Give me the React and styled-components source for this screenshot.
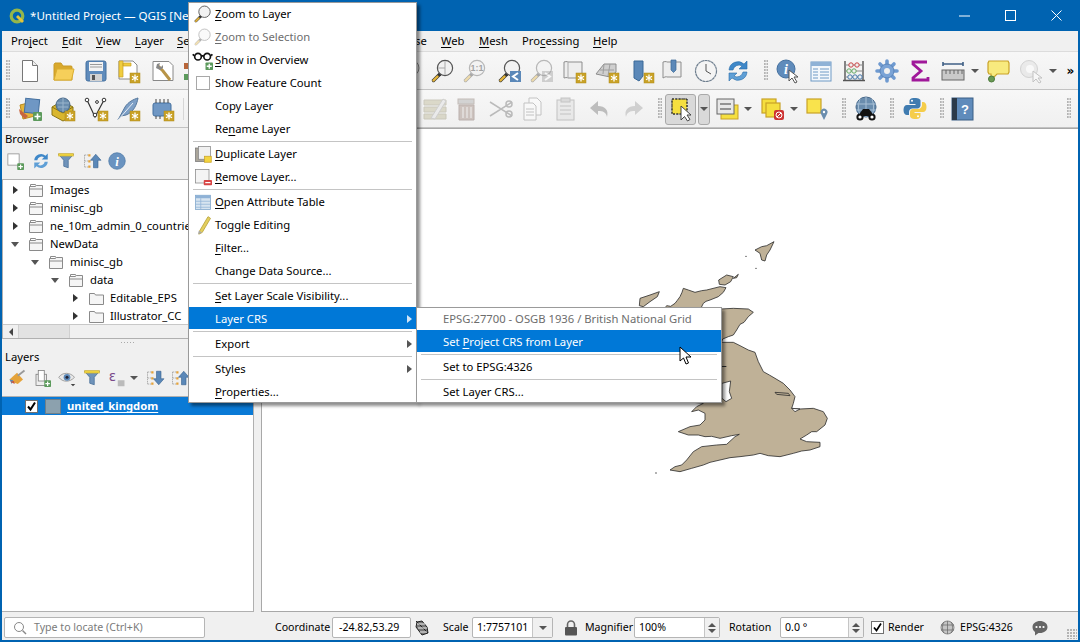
import React from "react";
import styled, { createGlobalStyle, css } from "styled-components";

const Global = createGlobalStyle`
  html, body { margin: 0; padding: 0; background: #f0f0f0; }
  body { font: 11.25px/1 "Noto Sans", "Open Sans", sans-serif; color: #000; }
  u { text-underline-offset: 2px; text-decoration-thickness: 1px; }
`;

const Window = styled.div`
  width: 1080px; height: 642px; box-sizing: border-box; position: relative; overflow: hidden;
  border: 2px solid #0063b1; border-top: 0; background: #f0f0f0; display: flex; flex-direction: column;
`;
const TitleBar = styled.div`
  height: 31px; margin: 0 -2px; background: #0063b1; color: #fff; display: flex; align-items: center; flex: none;
  font-size: 11.6px;
`;
const TitleLogo = styled.span`width: 30px; display: flex; justify-content: center; padding-left: 3px; box-sizing: border-box;`;
const TitleText = styled.span`flex: 1; white-space: nowrap;`;
const WinButton = styled.span`width: 46px; height: 31px; display: flex; align-items: center; justify-content: center;`;
const MenuBar = styled.div`height: 20px; flex: none; display: flex; align-items: center; padding-left: 9px; border-bottom: 1px solid #dcdcdc; background: #f0f0f0;`;
const MenuTitle = styled.span`width: ${p => p.$w}px; flex: none; white-space: nowrap;`;
const MenuGap = styled.span`width: ${p => p.$w}px; flex: none;`;
const Toolbar = styled.div`
  height: ${p => p.$h}px; flex: none; display: flex; align-items: center; box-sizing: border-box;
  background: linear-gradient(#f7f7f7, #f0f0f0); border-bottom: 1px solid #c2c2c2;
`;
const Tool = styled.span`
  width: 24px; height: 24px; flex: none; display: flex; align-items: center; justify-content: center; position: relative;
  ${p => p.$active && css`
    &::before { content: ""; position: absolute; inset: -3px -3px -4px -4px; background: #d9d9d9; border: 1px solid #a9a9a9; border-radius: 3px; box-sizing: border-box; }
    & > * { position: relative; }
  `}
  ${p => p.$drop && css`
    &::before { content: ""; position: absolute; inset: -3px 6px -4px 6px; background: #d9d9d9; border: 1px solid #a9a9a9; border-radius: 3px; box-sizing: border-box; }
    & > * { position: relative; }
  `}
`;
const Grip = styled.span`
  width: 4px; height: 21px; display: block;
  background-image: radial-gradient(circle at 1px 1px, #b4b4b4 0.9px, transparent 1px);
  background-size: 2.5px 3px;
`;
const Sep = styled.span`width: 1px; height: 22px; background: #d6d6d6;`;
const Caret = styled.span`width: 0; height: 0; border: 4px solid transparent; border-top: 4px solid #555; border-bottom: 0; display: block;`;
const More = styled.span`font: bold 12px "DejaVu Sans", sans-serif; letter-spacing: -1px;`;
const Main = styled.div`flex: 1; display: flex; min-height: 0;`;
const LeftDock = styled.div`width: 252px; flex: none; display: flex; flex-direction: column; `;
const DockTitle = styled.div`height: ${p => p.$h}px; display: flex; align-items: center; padding-left: 3px; flex: none;`;
const DockTools = styled.div`height: ${p => p.$h}px; display: flex; align-items: flex-start; flex: none; padding-top: 2px; box-sizing: border-box;`;
const SmallTool = styled.span`width: 18px; height: 18px; flex: none; display: flex; align-items: center; justify-content: center;`;
const TreeFrame = styled.div`height: 160px; flex: none; border: 1px solid #b0b0b0; box-sizing: border-box; display: flex; flex-direction: column; background: #fff; overflow: hidden;`;
const TreeBody = styled.div`flex: 1; padding-top: 1px; overflow: hidden; min-height: 0;`;
const TreeRow = styled.div`height: 18px; display: flex; align-items: center; padding-left: ${p => p.$depth * 20 + 7}px; white-space: nowrap;`;
const Arrow = styled.span`
  width: 19px; flex: none; display: flex; justify-content: flex-start; padding-left: 2px; box-sizing: border-box;
  &::before { content: ""; display: block; border-style: solid; border-color: transparent;
    ${p => p.$open
      ? css`border-width: 5px 4px 0 4px; border-top-color: #555; margin-left: -1px;`
      : css`border-width: 4px 0 4px 5px; border-left-color: #333; margin-left: 1px;`}
  }
`;
const TreeLabel = styled.span`margin-left: 6px;`;
const HScroll = styled.div`height: 13px; flex: none; display: flex; background: #f0f0f0; border-top: 1px solid #c8c8c8; align-items: stretch;`;
const ScrollBtn = styled.span`width: 15px; display: flex; align-items: center; justify-content: center;
  &::before { content: ""; border-style: solid; border-width: 4px 4px 4px 0; border-color: transparent #444 transparent transparent; }`;
const ScrollThumb = styled.span`width: 50px; background: #e2e2e2; border-left: 1px solid #d0d0d0; border-right: 1px solid #d0d0d0;`;
const DockSplit = styled.div`height: 7px; flex: none; display: flex; align-items: center; justify-content: center;
  &::before { content: ""; width: 16px; height: 1px; background-image: radial-gradient(circle, #aaa 0.7px, transparent 0.8px); background-size: 3px 1px; }`;
const LayerList = styled.div`flex: 1; background: #fff; border: 1px solid #b0b0b0; border-width: 1px 1px 1px 0; box-sizing: border-box;`;
const LayerRow = styled.div`height: 18px; background: #0a7ad6; display: flex; align-items: center; padding-left: 23px; color: #fff; font-weight: 700; text-decoration: underline; text-underline-offset: 2px;`;
const Check = styled.span`
  width: 13px; height: 13px; flex: none; box-sizing: border-box; background: #fff; border: 1px solid #707070; display: flex; align-items: center; justify-content: center;
  margin-left: ${p => p.$ml || 0}px;
`;
const Swatch = styled.span`width: 16px; height: 15px; box-sizing: border-box; background: #8ca1ae; border: 1px solid #6f7f89; margin: 0 6px 0 7px; flex: none;`;
const Canvas = styled.div`flex: 1; margin-left: 7px; background: #fff; border: 1px solid #a8a8a8; border-width: 1px 0 1px 1px; position: relative; overflow: hidden; box-sizing: border-box;`;
const MapSvg = styled.svg`position: absolute; left: 358px; top: 106px; width: 220px; height: 250px;`;
const StatusBar = styled.div`height: 28px; flex: none; display: flex; align-items: center; padding-top: 3px; box-sizing: border-box; position: relative; font-size: 10.6px;`;
const Locator = styled.div`
  width: 201px; height: 21px; box-sizing: border-box; margin-left: 2px; border: 1px solid #b5b5b5; border-radius: 2px; background: #fff;
  display: flex; align-items: center; padding-left: 8px; gap: 7px; color: #7a7a7a; flex: none;
`;
const SLabel = styled.span`margin-left: ${p => p.$ml}px; width: ${p => p.$w}px; white-space: nowrap; flex: none;`;
const Field = styled.span`
  width: ${p => p.$w}px; height: 21px; box-sizing: border-box; border: 1px solid #b5b5b5; border-radius: 2px; background: #fff;
  display: flex; align-items: center; flex: none; padding-left: ${p => p.$pl || 4}px; position: relative; white-space: nowrap;
`;
const SpinBox = styled.span`position: absolute; right: 0; top: 0; bottom: 0; width: 14px; background: #f0f0f0; border-left: 1px solid #c5c5c5; display: flex; flex-direction: column; align-items: center; justify-content: center; gap: 2px;
  &::before { content: ""; border-style: solid; border-width: 0 4px 4px 4px; border-color: transparent transparent #555 transparent; }
  &::after { content: ""; border-style: solid; border-width: 4px 4px 0 4px; border-color: #555 transparent transparent transparent; }`;
const ComboDrop = styled.span`position: absolute; right: 0; top: 0; bottom: 0; width: 19px; background: #f0f0f0; border-left: 1px solid #c5c5c5; display: flex; align-items: center; justify-content: center;
  &::before { content: ""; border-style: solid; border-width: 4px 4px 0 4px; border-color: #555 transparent transparent transparent; }`;
const StatusIcon = styled.span`margin-left: ${p => p.$ml}px; width: 18px; height: 18px; flex: none; display: flex; align-items: center; justify-content: center;`;
const SizeGrip = styled.span`position: absolute; right: 1px; bottom: 1px; width: 10px; height: 10px;
  background-image: radial-gradient(circle at 1px 1px, #b4b4b4 0.8px, transparent 0.9px); background-size: 3px 3px;`;
const PopMenu = styled.div`
  position: absolute; box-sizing: border-box; background: #fff; border: 1px solid #9a9a9a; box-shadow: 3px 3px 3px rgba(0,0,0,.45);
  left: ${p => p.$x}px; top: ${p => p.$y}px; width: ${p => p.$w}px; height: ${p => p.$h}px; overflow: hidden; z-index: ${p => p.$z};
`;
const Row = styled.div`
  height: 23px; display: flex; align-items: center; position: relative; box-sizing: border-box; padding-bottom: 1px; white-space: nowrap;
  color: ${p => p.$off ? "#6d6d6d" : "#000"};
  ${p => p.$hi && css`
    color: #fff; z-index: 0;
    &::before { content: ""; position: absolute; left: 0; right: 0; top: -1px; height: 22px; background: #0078d7; z-index: -1; }
  `}
`;
const RowIcon = styled.span`width: 26px; flex: none; display: flex; justify-content: center; padding-left: 1px; box-sizing: border-box; align-items: center;`;
const BoxIcon = styled.span`width: 14px; height: 14px; display: block; box-sizing: border-box; border: 1px solid #a8a8a8; background: #fff;`;
const SubArrow = styled.span`position: absolute; right: 4px; top: 7px; border-style: solid; border-width: 4px 0 4px 5px; border-color: transparent transparent transparent ${p => p.$hi ? "#cfe4f7" : "#555"};`;
const RowSep = styled.div`height: 2px; margin: 0 4px; box-sizing: border-box; border-top: 1px solid #c4c4c4;`;
const Cursor = styled.svg`position: absolute; left: 677px; top: 346px; width: 14px; height: 19px; z-index: 5;`;
const Icon = styled.svg.attrs(p => ({ viewBox: "0 0 24 24", width: p.$s || 24, height: p.$s || 24 }))`display: block; overflow: visible;`;

const Gold = () => (<g><rect x="14" y="14" width="10" height="10" fill="#c9a227" stroke="#b08a18" strokeWidth=".5" /><path d="M19 15.5v7M16 17.2l6 3.6M22 17.2l-6 3.6" stroke="#fff" strokeWidth="1.3" /></g>);
const Glass = ({ off, children }) => (
  <g opacity={off ? .38 : 1}>
    <path d="M9 15L2.5 21.5" stroke="#333" strokeWidth="3.4" strokeLinecap="round" />
    <path d="M6.5 17.5L2.5 21.5" stroke="#e5b53a" strokeWidth="2.4" strokeLinecap="round" />
    <circle cx="14" cy="9" r="7.6" fill="#f2f2f2" stroke="#555" strokeWidth="1.2" />
    {children}
  </g>
);
const Funnel = () => (<g><path d="M2 3h20l-7 8v10l-6-2v-8z" fill="#6f93ba" stroke="#456d97" /><path d="M2 2h20v3.5H2z" fill="#ecd23f" stroke="#c9a227" strokeWidth=".6" /></g>);
const Cat = ({ up }) => (
  <g>
    <path d="M2 4v16M2 4h6M2 12h6M2 20h6" stroke="#999" fill="none" strokeDasharray="2 1" />
    <rect x="7" y="3" width="3" height="3" fill="#e5a33a" /><rect x="7" y="11" width="3" height="3" fill="#e5a33a" /><rect x="7" y="18" width="3" height="3" fill="#e5a33a" />
    <path d={up ? "M17 3l7 8h-4v10h-6V11h-4z" : "M14 3h6v10h4l-7 8-7-8h4z"} fill="#5b88b8" stroke="#35618f" strokeWidth=".8" />
  </g>
);
const GreenPlus = () => (<g><rect x="15" y="15" width="9" height="9" fill="#5c9a5c" rx="1" /><path d="M19.5 16.5v6M16.5 19.5h6" stroke="#fff" strokeWidth="1.6" /></g>);

const I = {
  newDoc: <Icon><path d="M4.5 1.5h10l5 5v16h-15z" fill="#fff" stroke="#777" /><path d="M14.5 1.5v5h5" fill="#eee" stroke="#777" /></Icon>,
  folder: <Icon><path d="M3 21V5.5l1-1.5h6l2 3h8.5l.5 1V21z" fill="#d9a92c" stroke="#c99a24" /><path d="M3 21l3-11h17l-2.5 11z" fill="#f6cf5a" stroke="#d9ad30" /></Icon>,
  save: <Icon><rect x="2" y="2" width="20" height="20" rx="2" fill="#5f8bbb" stroke="#44709f" /><rect x="5" y="3" width="14" height="9" fill="#f3f3f3" /><path d="M6 5.5h12M6 8h12" stroke="#999" /><rect x="6" y="15" width="12" height="7" fill="#d2d2d2" /><rect x="8" y="16" width="3" height="5" fill="#555" /></Icon>,
  printLayout: <Icon><path d="M3 2h14l4 4v14H3z" fill="#fff" stroke="#888" /><path d="M3 2h4v16h-4zM7 4h8v3H7z" fill="#f0cd3f" stroke="#c9a227" strokeWidth=".7" /><Gold /></Icon>,
  layoutMgr: <Icon><path d="M2 2.5h16l4 4v15H2z" fill="#fff" stroke="#888" /><path d="M7 7l5 5 7 9" stroke="#b89447" strokeWidth="3" /><path d="M5 9l1-4 3-1-1 3 2 1 2-2v3l-3 2z" fill="#888" /></Icon>,
  hiddenTool: <Icon><rect x="0" y="4" width="6" height="6" fill="#b8663a" /><rect x="0" y="15" width="6" height="6" fill="#5c9a5c" /></Icon>,
  pan: <Icon><circle cx="5" cy="9" r="8" fill="#eee" stroke="#888" /></Icon>,
  zoomNative: <Icon><Glass><path d="M14 2v14M14 9h-7" stroke="#aaa" fill="none" /></Glass></Icon>,
  zoom11: <Icon><Glass off><text x="14" y="12" fontSize="9" fontWeight="700" textAnchor="middle" fontFamily="Liberation Sans" fill="#222">1:1</text></Glass></Icon>,
  zoomLast: <Icon><Glass /><rect x="12" y="12" width="11" height="11" fill="#5b88b8" /><path d="M20 14l-5 3.5 5 3.5" stroke="#fff" strokeWidth="2" fill="none" /></Icon>,
  zoomNext: <Icon><Glass off /><g opacity=".4"><rect x="12" y="12" width="11" height="11" fill="#999" /><path d="M15 14l5 3.5-5 3.5" stroke="#fff" strokeWidth="2" fill="none" /></g></Icon>,
  mapView: <Icon><path d="M2 3c3-1 4 0 4 0h14v16H6s-1-1-4 0z" fill="#eee" stroke="#8d8d8d" /><path d="M6 3v16" stroke="#aaa" /><Gold /></Icon>,
  map3d: <Icon><path d="M1 15L9 5h12v8l-6 5z" fill="#cfcfcf" stroke="#8d8d8d" /><path d="M5 11h14M9 5l-1 10M15 5l-2 12" stroke="#9e9e9e" fill="none" /><Gold /></Icon>,
  bookmarkNew: <Icon><path d="M4 2h9v15l-4 5-5-3z" fill="#5b88b8" stroke="#3a6897" /><Gold /></Icon>,
  bookmarks: <Icon><path d="M2 3c3-1 4 0 4 0h14v15H6s-1-1-4 1z" fill="#eee" stroke="#8d8d8d" /><path d="M10 1h5v10l-2.5 2.5L10 11z" fill="#5b88b8" stroke="#3a6897" strokeWidth=".7" /></Icon>,
  clock: <Icon><circle cx="12" cy="12" r="10.5" fill="#f4f4f4" stroke="#6f7f8f" strokeWidth="1.2" strokeDasharray="3 .4" /><path d="M12 5v7l5 3" stroke="#555" fill="none" /></Icon>,
  refresh: <Icon><path d="M3 11a9 9 0 0 1 15-6l3-3v8h-8l3-3a6 6 0 0 0-9 4z" fill="#3f88c9" stroke="#2a6da8" strokeWidth=".6" /><path d="M21 13a9 9 0 0 1-15 6l-3 3v-8h8l-3 3a6 6 0 0 0 9-4z" fill="#5f9fd6" stroke="#2a6da8" strokeWidth=".6" /></Icon>,
  identify: <Icon><circle cx="10" cy="10" r="9" fill="#5f8bbb" stroke="#44709f" /><text x="10" y="15" fontFamily="Liberation Serif" fontStyle="italic" fontWeight="700" fontSize="14" fill="#fff" textAnchor="middle">i</text><path d="M13 11v11l3-3 3 5 2-1-3-5h4z" fill="#fff" stroke="#555" /></Icon>,
  table: <Icon><rect x="2" y="3" width="20" height="19" fill="#f3f7fb" stroke="#6f9ac5" /><rect x="2" y="3" width="20" height="4" fill="#8fb2d6" /><path d="M4 10h5M11 10h9M4 13h5M11 13h9M4 16h5M11 16h9M4 19h5M11 19h9" stroke="#6f9ac5" /></Icon>,
  abacus: <Icon><path d="M3 2v19M21 2v19M1 21.5h22" stroke="#555" strokeWidth="1.4" /><path d="M3 6h18M3 12h18M3 18h18" stroke="#888" /><g fill="#eee" strokeWidth="1"><circle cx="9" cy="6" r="2.2" stroke="#c44" /><circle cx="15" cy="6" r="2.2" stroke="#c44" /><circle cx="7" cy="12" r="2.2" stroke="#6a6" /><circle cx="12" cy="12" r="2.2" stroke="#6a6" /><circle cx="8" cy="18" r="2.2" stroke="#47a" /><circle cx="13" cy="18" r="2.2" stroke="#47a" /><circle cx="18" cy="18" r="2.2" stroke="#47a" /></g></Icon>,
  gear: <Icon><g stroke="#6f9ad0" strokeWidth="3.6" strokeLinecap="round"><path d="M12 2v20M2 12h20M5 5l14 14M19 5L5 19" /></g><circle cx="12" cy="12" r="7" fill="#7aa3d6" stroke="#5a85bb" /><circle cx="12" cy="12" r="3" fill="#f0f0f0" /></Icon>,
  sigma: <Icon><path d="M19 3H5v2l8 7-8 7v2h15v-3" fill="none" stroke="#a0189a" strokeWidth="2.8" /></Icon>,
  ruler: <Icon><path d="M2 5h20M2 3v4M22 3v4" stroke="#3f5f85" strokeWidth="1.6" /><rect x="1" y="11" width="22" height="10" fill="#c9c9c9" stroke="#666" /><path d="M5 11v4M9 11v4M13 11v4M17 11v4M21 11v4" stroke="#666" /></Icon>,
  note: <Icon><path d="M3 2h19l1 2v9l-1 2H11l-6 6v-6H3l-1-2V4z" fill="#f8ea7e" stroke="#c9a227" strokeWidth="1.2" /><circle cx="5.5" cy="20" r="3" fill="#6a9a55" stroke="#4c7a3c" /></Icon>,
  tip: <Icon><g opacity=".45"><circle cx="10" cy="10" r="8.5" fill="#ddd" stroke="#aaa" /><circle cx="11" cy="10" r="4" fill="#fff" /><path d="M14 12v11l3-3 3 4 2-1-3-4h4z" fill="#fff" stroke="#888" /></g></Icon>,
  dataSource: <Icon><path d="M2 8l12-3 3 14-12 3z" fill="#e5b53a" stroke="#b98a1c" /><path d="M1 12l9 7-3 3-5-5z" fill="#c8653f" /><rect x="7" y="2" width="14" height="14" transform="rotate(6 14 9)" fill="#6f97c4" stroke="#44709f" /><GreenPlus /></Icon>,
  gpkg: <Icon><path d="M1 10l10-6 11 6v9l-10 5L1 18z" fill="#d9b62e" stroke="#8a7415" /><path d="M1 10l11 6 10-6" fill="none" stroke="#8a7415" /><circle cx="12" cy="8" r="7" fill="#6a8dae" stroke="#47688a" /><path d="M6 6h12M7 10h10M12 1v14" stroke="#99b4cc" /><Gold /></Icon>,
  vertex: <Icon><path d="M3 3l8 17 9-17" fill="none" stroke="#333" strokeWidth="1.2" /><g fill="#fff" stroke="#333"><circle cx="3" cy="3" r="1.8" /><circle cx="20" cy="3" r="1.8" /><circle cx="11" cy="18" r="1.8" /><circle cx="13" cy="5" r="1.4" /></g><Gold /></Icon>,
  feather: <Icon><path d="M2 23L9 10c3-5 9-8 13-9-1 6-4 14-12 17l-5 1z" fill="#7d9fc6" stroke="#55779c" /><path d="M2 23L17 6" stroke="#e8eef5" /><Gold /></Icon>,
  chip: <Icon><rect x="3" y="6" width="18" height="13" rx="2" fill="#6f97c4" stroke="#44709f" /><path d="M6 2v4M10 2v4M14 2v4M18 2v4M6 19v3M10 19v3" stroke="#444" /><Gold /></Icon>,
  editTable: <Icon><g opacity=".4"><path d="M1 3h22v5H1zM1 10h22v5H1zM1 17h22v5H1z" fill="#b6b08a" stroke="#8f8a6b" /><path d="M8 21L20 2l3 2-11 18z" fill="#ddd" stroke="#999" /></g></Icon>,
  trash: <Icon><g opacity=".45"><rect x="3" y="2" width="16" height="5" fill="#aaa" stroke="#8a7a70" /><path d="M4 8h15v15H4z" fill="#a08a80" stroke="#7a655c" /><path d="M8 10v11M12 10v11M16 10v11" stroke="#eee" /></g></Icon>,
  scissors: <Icon><g opacity=".45" fill="none" stroke="#777" strokeWidth="1.5"><path d="M1 5l22 14M1 19L23 5" /><circle cx="20" cy="7" r="3" /><circle cx="20" cy="17" r="3" /></g></Icon>,
  copy: <Icon><g opacity=".45"><path d="M8 1h8l4 4v13H8z" fill="#fff" stroke="#888" /><path d="M3 6h9l3 3v14H3z" fill="#fff" stroke="#888" /><path d="M5 12h8M5 15h8M5 18h8" stroke="#888" /></g></Icon>,
  paste: <Icon><g opacity=".45"><rect x="3" y="3" width="17" height="20" fill="#ddd" stroke="#888" /><rect x="7" y="1" width="9" height="4" fill="#bbb" stroke="#888" /><path d="M6 9h11M6 13h11M6 17h11" stroke="#888" /></g></Icon>,
  undo: <Icon><path d="M10 4L2 11l8 7v-4c5 0 8 1 9 6 2-7-2-11-9-11z" fill="#bdbdbd" /></Icon>,
  redo: <Icon><path d="M14 4l8 7-8 7v-4c-5 0-8 1-9 6-2-7 2-11 9-11z" fill="#d0d0d0" /></Icon>,
  select: <Icon><rect x="3" y="2" width="15" height="15" fill="#f5df3f" stroke="#555" strokeDasharray="2 1" /><rect x="3" y="2" width="15" height="15" fill="none" stroke="#222" strokeDasharray="2 1.5" /><path d="M12 9v14l3.5-3.5 3 4.5 2.5-1.5-3-4.5h4z" fill="#fff" stroke="#444" /></Icon>,
  deselect: <Icon><rect x="6" y="8" width="17" height="14" fill="#f5df3f" stroke="#c9a227" /><rect x="2" y="2" width="17" height="15" fill="#e8e8e8" stroke="#666" /><path d="M5 7h11M5 12h11" stroke="#777" strokeWidth="1.5" /></Icon>,
  selectRed: <Icon><rect x="1" y="2" width="14" height="14" fill="#f5df3f" stroke="#c9a227" strokeWidth="1.2" /><rect x="5" y="6" width="14" height="14" fill="#f5df3f" stroke="#c9a227" strokeWidth="1.2" /><rect x="13" y="13" width="10" height="10" rx="2" fill="#cc3333" /><circle cx="18" cy="18" r="3" fill="none" stroke="#fff" /><path d="M16 20l4-4" stroke="#fff" /></Icon>,
  selectPin: <Icon><rect x="2" y="2" width="14" height="14" fill="#f9e34c" stroke="#c9a227" strokeWidth="1.2" /><path d="M19 23l-3-6a3.5 3.5 0 1 1 6 0z" fill="#6a8dae" /><circle cx="19" cy="15" r="1.2" fill="#fff" /></Icon>,
  globeBin: <Icon><circle cx="12" cy="10" r="10" fill="#6a8dae" stroke="#47688a" /><path d="M2 7h20M2 13h20M12 0v20M6 2c-2 5-2 11 0 16M18 2c2 5 2 11 0 16" stroke="#a8c0d6" fill="none" /><circle cx="6" cy="20" r="3.6" fill="#111" /><circle cx="18" cy="20" r="3.6" fill="#111" /><path d="M6 16l3-4h6l3 4v3H6z" fill="#111" /><circle cx="6" cy="20" r="1.6" fill="#fff" /><circle cx="18" cy="20" r="1.6" fill="#fff" /></Icon>,
  python: <Icon><path d="M11.5 1c-4 0-5 1.500-5 3.500V7h6v1H4c-2 0-3.500 1.500-3.500 5s1.500 5 3.500 5h2v-3c0-2 1.500-3.500 3.500-3.500h5c1.500 0 3-1.500 3-3V4.500C18 2.500 16 1 11.500 1z" fill="#3f7bb0" /><path d="M12.500 22c4 0 5-1.500 5-3.500V16h-6v-1H20c2 0 3.500-1.500 3.500-5S22 5 20 5h-1v3c0 2-1.500 4-4 4H9.500C8 12 7 13.500 7 15v3.500C7 20.500 8.500 22 12.500 22z" fill="#f5cd4a" /><circle cx="9" cy="3.800" r="1" fill="#fff" /><circle cx="15" cy="19.300" r="1" fill="#fff" /></Icon>,
  help: <Icon><rect x="1" y="1" width="21" height="22" fill="#5f8bbb" stroke="#3b5f85" /><rect x="1" y="1" width="5" height="22" fill="#2b3a4a" /><text x="14" y="17" fontFamily="Liberation Sans" fontWeight="700" fontSize="13" fill="#fff" textAnchor="middle">?</text></Icon>,
};

const S = {
  addFav: <Icon $s={18}><rect x="2.500" y="2.500" width="15" height="15" fill="#fff" stroke="#888" /><GreenPlus /></Icon>,
  refresh: <Icon $s={18}><path d="M3 11a9 9 0 0 1 15-6l3-3v8h-8l3-3a6 6 0 0 0-9 4z" fill="#3f88c9" /><path d="M21 13a9 9 0 0 1-15 6l-3 3v-8h8l-3 3a6 6 0 0 0 9-4z" fill="#5f9fd6" /></Icon>,
  funnel: <Icon $s={18}><Funnel /></Icon>,
  collapseUp: <Icon $s={18}><Cat up /></Icon>,
  expandDown: <Icon $s={18}><Cat /></Icon>,
  info: <Icon $s={18}><circle cx="12" cy="12" r="11" fill="#6a93c0" stroke="#4c78a6" /><text x="12" y="18" fontFamily="Liberation Serif" fontStyle="italic" fontWeight="700" fontSize="17" fill="#fff" textAnchor="middle">i</text></Icon>,
  brush: <Icon $s={18}><path d="M2 14l10-9 8 9-7 6-5-2z" fill="#e5a33a" /><path d="M2 14l5 1-2 5z" fill="#5b88b8" /><path d="M3 17l5-1 1 4z" fill="#c8553f" /><path d="M13 9l9-7" stroke="#999" strokeWidth="2.400" /></Icon>,
  addGroup: <Icon $s={18}><rect x="4" y="7" width="14" height="15" fill="#eee" stroke="#777" /><rect x="7" y="2" width="8" height="14" fill="#fff" stroke="#777" /><GreenPlus /></Icon>,
  eye: <Icon $s={18}><path d="M1 11c5-7 15-7 21 0-6 7-16 7-21 0z" fill="#e8e8e8" stroke="#888" /><circle cx="12" cy="11" r="4.500" fill="#5b88b8" /><circle cx="12" cy="11" r="2" fill="#223" /><path d="M17 20l3 3 3-3z" fill="#444" /></Icon>,
  epsilon: <Icon $s={18}><text x="1" y="16" fontFamily="DejaVu Sans" fontSize="18" fill="#7a4a8a">ε</text><rect x="13" y="15" width="9" height="8" fill="#bbb" /></Icon>,
};

const M = {
  zoom: <Icon $s={18}><Glass /></Icon>,
  zoomOff: <Icon $s={18}><Glass off /></Icon>,
  overview: <Icon $s={20}><circle cx="6" cy="8" r="4" fill="#fff" stroke="#111" strokeWidth="2" /><circle cx="17" cy="8" r="4" fill="#fff" stroke="#111" strokeWidth="2" /><path d="M10 7h3M1 7L0 5M22 7l1-2" stroke="#111" strokeWidth="2" /><GreenPlus /></Icon>,
  duplicate: <Icon $s={18}><rect x="2" y="4" width="16" height="18" fill="#aaa59a" stroke="#777" /><rect x="6" y="2" width="16" height="17" fill="#f0f0f0" stroke="#888" /><rect x="14" y="15" width="9" height="8" fill="#f3d43f" stroke="#c9a227" /></Icon>,
  remove: <Icon $s={18}><rect x="2" y="2" width="18" height="18" fill="#f4f4f4" stroke="#888" /><rect x="13" y="16" width="11" height="7" rx="1" fill="#d84444" /><path d="M15 19.500h7" stroke="#fff" strokeWidth="1.600" /></Icon>,
  table: <Icon $s={18}><rect x="2" y="3" width="20" height="19" fill="#d7e4f0" stroke="#7ba3c9" /><rect x="2" y="3" width="20" height="4" fill="#8fb2d6" /><path d="M2 11h20M2 15h20M2 19h20M9 7v15" stroke="#8fb2d6" /></Icon>,
  pencil: <Icon $s={20}><path d="M8 19L18 2l3 2L11 21l-4 2z" fill="#e4cf5e" stroke="#b7a23a" /><path d="M6 23l1-4 4 2z" fill="#aaa" /></Icon>,
};

const t1 = [[8, <Grip />], [30, I.newDoc], [63, I.folder], [96, I.save], [128, I.printLayout], [163, I.layoutMgr], [196, I.hiddenTool],
  [418, I.pan], [443, I.zoomNative], [475, I.zoom11], [510, I.zoomLast], [542, I.zoomNext], [574, I.mapView], [607, I.map3d], [642, I.bookmarkNew], [673, I.bookmarks], [706, I.clock], [738, I.refresh],
  [766, <Grip />], [788, I.identify], [821, I.table], [854, I.abacus], [887, I.gear], [920, I.sigma], [953, I.ruler], [975, <Caret />], [998, I.note], [1031, I.tip], [1053, <Caret />], [1070, <More>»</More>]];
const t2 = [[8, <Grip />], [30, I.dataSource], [63, I.gpkg], [96, I.vertex], [128, I.feather], [162, I.chip], [183, <Sep />],
  [435, I.editTable], [467, I.trash], [501, I.scissors], [533, I.copy], [566, I.paste], [600, I.undo], [633, I.redo], [660, <Grip />],
  [681, I.select, "active"], [704, <Caret />, "drop"], [727, I.deselect], [748, <Caret />], [773, I.selectRed], [794, <Caret />], [817, I.selectPin], [844, <Grip />], [866, I.globeBin], [892, <Grip />], [915, I.python], [942, <Grip />], [963, I.help], [1069, <Grip />]];

const ToolStrip = ({ items, h }) => (
  <Toolbar $h={h}>
    {items.map(([c, node, mode], i) => {
      const prev = i ? items[i - 1][0] : -10;
      return <Tool key={i} $active={mode === "active"} $drop={mode === "drop"} style={{ marginLeft: c - prev - 24 }}>{node}</Tool>;
    })}
  </Toolbar>
);

const Folder = ({ open }) => (
  <svg width="15" height="15" viewBox="0 0 15 15" style={{ display: "block", flex: "none" }}>
    {open && <path d="M1.500 3.500v-2h5l1 2" fill="none" stroke="#8a8a8a" />}
    <path d={open ? "M.5 13.500v-10h6l1-1h6v11z" : "M.5 13.500V2.500h5l1 1.500h8v9.500z"} fill="#f5f5f5" stroke="#8a8a8a" />
    {open && <path d="M1 6h13" stroke="#8a8a8a" />}
  </svg>
);

const tree = [
  { d: 0, l: "Images", o: false, f: true },
  { d: 0, l: "minisc_gb", o: false, f: true },
  { d: 0, l: "ne_10m_admin_0_countries", o: false, f: true },
  { d: 0, l: "NewData", o: true, f: true },
  { d: 1, l: "minisc_gb", o: true, f: true },
  { d: 2, l: "data", o: true, f: true },
  { d: 3, l: "Editable_EPS", o: false },
  { d: 3, l: "Illustrator_CC", o: false },
];

const RowItem = ({ icon, children, off, hi, sub }) => (
  <Row $off={off} $hi={hi}><RowIcon>{icon}</RowIcon><span>{children}</span>{sub && <SubArrow $hi={hi} />}</Row>
);

const UK = () => (
  <MapSvg viewBox="0 0 660 750">
    <g fill="#bfb197" stroke="#2a2a2a" strokeWidth="2.400" strokeLinejoin="round">
      <path d="M120 240L140 212L152 214L165 205L172 196L180 185L186 172L190 160L205 165L225 172L245 167L260 165L300 155L318 158L310 172L295 185L270 195L258 199L250 205L240 225L200 240z" />
      <path d="M200 225L303 222L340 220L385 222L400 232L385 245L372 262L360 268L350 285L340 300L325 305L308 312L305 322L340 322L360 332L385 345L405 352L410 366L415 380L430 410L448 420L465 430L490 445L510 465L525 485L520 505L515 520L540 522L580 520L610 530L622 550L615 570L590 590L575 590L560 600L540 612L560 620L600 622L600 635L570 645L545 648L520 655L480 665L445 662L420 655L400 660L360 665L330 668L300 675L270 682L250 690L215 700L180 710L150 705L165 695L185 690L200 675L220 650L245 635L290 630L320 628L345 605L358 598L335 602L300 610L275 604L255 605L235 600L205 600L175 590L210 575L240 570L255 555L255 535L235 525L215 530L230 515L250 505L200 500z" />
      <path d="M60 190L90 180L118 170L112 185L90 200L70 215L58 212z" />
      <path d="M296 135L320 120L340 125L332 140L315 150L298 148z" />
      <path d="M340 130L355 118L350 128z" />
      <path d="M405 45L425 35L440 32L462 20L450 45L440 60L435 78L425 75L420 55z" />
      <path d="M306 445L332 438L328 470L335 490L318 500L306 490z" fill="#fff" />
      <path d="M465 472L505 475L510 482L470 478z" />
      <path d="M515 520L540 522L525 530z" fill="#fff" />
    </g>
    <g fill="#2a2a2a"><circle cx="378" cy="64" r="2" /><circle cx="408" cy="100" r="2" /><circle cx="108" cy="714" r="2" /><path d="M305 393h14v3h-14z" /></g>
  </MapSvg>
);

export default function App() {
  return (
    <Window>
      <Global />
      <TitleBar>
        <TitleLogo>
          <svg width="16" height="16" viewBox="0 0 16 16"><circle cx="8" cy="8" r="5.800" fill="none" stroke="#93b64b" strokeWidth="3.200" /><path d="M8 8l6 6" stroke="#e5c53a" strokeWidth="2.800" /></svg>
        </TitleLogo>
        <TitleText>*Untitled Project — QGIS [New</TitleText>
        <WinButton><svg width="12" height="2"><path d="M0 1h11" stroke="#fff" /></svg></WinButton>
        <WinButton><svg width="12" height="12"><rect x=".5" y=".5" width="10" height="10" fill="none" stroke="#fff" /></svg></WinButton>
        <WinButton><svg width="12" height="12"><path d="M.5 .5l10 10M10.500 .5l-10 10" stroke="#fff" /></svg></WinButton>
      </TitleBar>
      <MenuBar>
        <MenuTitle $w={51}>Pro<u>j</u>ect</MenuTitle>
        <MenuTitle $w={34}><u>E</u>dit</MenuTitle>
        <MenuTitle $w={39}><u>V</u>iew</MenuTitle>
        <MenuTitle $w={42}><u>L</u>ayer</MenuTitle>
        <MenuTitle $w={16}><u>S</u>e</MenuTitle>
        <MenuGap $w={222} />
        <MenuTitle $w={26}>se</MenuTitle>
        <MenuTitle $w={38}><u>W</u>eb</MenuTitle>
        <MenuTitle $w={43}><u>M</u>esh</MenuTitle>
        <MenuTitle $w={71}>Pro<u>c</u>essing</MenuTitle>
        <MenuTitle $w={40}><u>H</u>elp</MenuTitle>
      </MenuBar>
      <ToolStrip items={t1} h={38} />
      <ToolStrip items={t2} h={38} />
      <Main>
        <LeftDock>
          <DockTitle $h={22}>Browser</DockTitle>
          <DockTools $h={29}>
            {[S.addFav, S.refresh, S.funnel, S.collapseUp, S.info].map((n, i) => (
              <SmallTool key={i} style={{ marginLeft: i ? 7.5 : 4 }}>{n}</SmallTool>
            ))}
          </DockTools>
          <TreeFrame>
            <TreeBody>
              {tree.map((r, i) => (
                <TreeRow key={i} $depth={r.d}>
                  <Arrow $open={r.o} />
                  <Folder open={r.f} />
                  <TreeLabel>{r.l}</TreeLabel>
                </TreeRow>
              ))}
            </TreeBody>
            <HScroll><ScrollBtn /><ScrollThumb /></HScroll>
          </TreeFrame>
          <DockSplit />
          <DockTitle $h={21}>Layers</DockTitle>
          <DockTools $h={29}>
            {[S.brush, S.addGroup, S.eye, S.funnel, S.epsilon].map((n, i) => (
              <SmallTool key={i} style={{ marginLeft: i ? 7 : 6 }}>{n}</SmallTool>
            ))}
            <SmallTool style={{ marginLeft: -1 }}><Caret /></SmallTool>
            <SmallTool style={{ marginLeft: 3 }}>{S.expandDown}</SmallTool>
            <SmallTool style={{ marginLeft: 7 }}>{S.collapseUp}</SmallTool>
          </DockTools>
          <LayerList>
            <LayerRow>
              <Check><svg width="11" height="11" viewBox="0 0 11 11"><path d="M2 5.500l2.500 3L9 1.500" fill="none" stroke="#000" strokeWidth="2" /></svg></Check>
              <Swatch />
              united_kingdom
            </LayerRow>
          </LayerList>
        </LeftDock>
        <Canvas><UK /></Canvas>
      </Main>
      <StatusBar>
        <Locator>
          <svg width="14" height="14" viewBox="0 0 14 14"><circle cx="6" cy="6" r="4.500" fill="none" stroke="#888" /><path d="M9.500 9.500L13 13" stroke="#888" strokeWidth="1.400" /></svg>
          Type to locate (Ctrl+K)
        </Locator>
        <SLabel $ml={70} $w={57}>Coordinate</SLabel>
        <Field $w={79} $pl={6}>-24.82,53.29</Field>
        <StatusIcon $ml={2}>
          <svg width="16" height="18" viewBox="0 0 16 18"><path d="M2 2l12 12M2 8l6 8 6-2-1-6-5-6-5 1z" fill="#777" stroke="#222" /><path d="M3 5h8M4 9h9M6 13h7" stroke="#eee" /></svg>
        </StatusIcon>
        <SLabel $ml={12} $w={29}>Scale</SLabel>
        <Field $w={81}>1:7757101<ComboDrop /></Field>
        <StatusIcon $ml={9}>
          <svg width="14" height="16" viewBox="0 0 14 16"><path d="M3.500 7V4.500a3.500 3.500 0 0 1 7 0V7" fill="none" stroke="#666" strokeWidth="1.600" /><rect x="1" y="7" width="12" height="8.500" rx="1" fill="#555" /></svg>
        </StatusIcon>
        <SLabel $ml={5} $w={49}>Magnifier</SLabel>
        <Field $w={86}>100%<SpinBox /></Field>
        <SLabel $ml={9} $w={51}>Rotation</SLabel>
        <Field $w={84}>0.0 °<SpinBox /></Field>
        <Check $ml={7}><svg width="11" height="11" viewBox="0 0 11 11"><path d="M2 5.500l2.500 3L9 1.500" fill="none" stroke="#000" strokeWidth="1.700" /></svg></Check>
        <SLabel $ml={4} $w={50}>Render</SLabel>
        <StatusIcon $ml={0}>
          <svg width="15" height="15" viewBox="0 0 15 15"><circle cx="7.500" cy="7.500" r="6.500" fill="#c5c5c5" stroke="#888" /><path d="M1 5h13M1 10h13M7.500 1v13M4 2c-2 3-2 8 0 11M11 2c2 3 2 8 0 11" stroke="#666" fill="none" strokeWidth=".7" /></svg>
        </StatusIcon>
        <SLabel $ml={4} $w={71}>EPSG:4326</SLabel>
        <StatusIcon $ml={0}>
          <svg width="16" height="16" viewBox="0 0 16 16"><path d="M8 1c4 0 7.500 2.500 7.500 6S12 13 8 13H6.500L3 15.500V12C1.500 11 .5 9 .5 7 .5 3.500 4 1 8 1z" fill="#666" /><circle cx="4.500" cy="7" r="1.100" fill="#fff" /><circle cx="8" cy="7" r="1.100" fill="#fff" /><circle cx="11.500" cy="7" r="1.100" fill="#fff" /></svg>
        </StatusIcon>
        <SizeGrip />
      </StatusBar>

      <PopMenu $x={186} $y={2} $w={229} $h={401} $z={3}>
        <RowItem icon={M.zoom}><u>Z</u>oom to Layer</RowItem>
        <RowItem icon={M.zoomOff} off><u>Z</u>oom to Selection</RowItem>
        <RowItem icon={M.overview}><u>S</u>how in Overview</RowItem>
        <RowItem icon={<BoxIcon />}>Show Feature Count</RowItem>
        <RowItem>Copy Layer</RowItem>
        <RowItem>Re<u>n</u>ame Layer</RowItem>
        <RowSep />
        <RowItem icon={M.duplicate}><u>D</u>uplicate Layer</RowItem>
        <RowItem icon={M.remove}><u>R</u>emove Layer...</RowItem>
        <RowSep />
        <RowItem icon={M.table}><u>O</u>pen Attribute Table</RowItem>
        <RowItem icon={M.pencil}>Toggle Editing</RowItem>
        <RowItem><u>F</u>ilter...</RowItem>
        <RowItem>Change Data Source...</RowItem>
        <RowSep />
        <RowItem><u>S</u>et Layer Scale Visibility...</RowItem>
        <RowItem hi sub>Layer CRS</RowItem>
        <RowSep />
        <RowItem sub>Export</RowItem>
        <RowSep />
        <RowItem sub>Styles</RowItem>
        <RowItem><u>P</u>roperties...</RowItem>
      </PopMenu>
      <PopMenu $x={414} $y={307} $w={306} $h={96} $z={4}>
        <RowItem off>EPSG:27700 - OSGB 1936 / British National Grid</RowItem>
        <RowItem hi>Set <u>P</u>roject CRS from Layer</RowItem>
        <RowSep />
        <RowItem>Set to EPSG:4326</RowItem>
        <RowSep />
        <RowItem>Set Layer CRS...</RowItem>
      </PopMenu>
      <Cursor viewBox="0 0 14 19"><path d="M1 1v14l3.500-3 2.500 6 2.500-1-2.500-6h5z" fill="#fff" stroke="#000" /></Cursor>
    </Window>
  );
}
